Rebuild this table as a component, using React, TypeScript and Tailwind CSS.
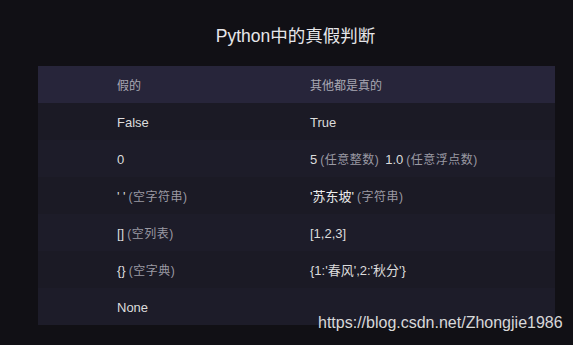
const FONT = "font-['Liberation_Sans','Noto_Sans_CJK_SC',sans-serif]";

type Cell = { main: string; note?: string; bright?: boolean };

const rows: { f: Cell[]; t: Cell[] }[] = [
  { f: [{ main: "False" }], t: [{ main: "True" }] },
  { f: [{ main: "0" }], t: [{ main: "5", note: "(任意整数)" }, { main: "1.0", note: "(任意浮点数)" }] },
  { f: [{ main: "' '", note: "(空字符串)" }], t: [{ main: "'苏东坡'", note: "(字符串)", bright: true }] },
  { f: [{ main: "[]", note: "(空列表)" }], t: [{ main: "[1,2,3]" }] },
  { f: [{ main: "{}", note: "(空字典)" }], t: [{ main: "{1:'春风',2:'秋分'}" }] },
  { f: [{ main: "None" }], t: [] },
];

function CellText({ items }: { items: Cell[] }) {
  return (
    <div className="flex items-center gap-[6px]">
      {items.map((c, i) => (
        <span key={i} className="flex items-center gap-[3px]">
          <span className={c.bright ? "text-[13px] text-[#ececec]" : "text-[13px] text-[#dcdcdc]"}>
            {c.main}
          </span>
          {c.note && <span className="text-[12px] tracking-[0.5px] text-[#9a99a3]">{c.note}</span>}
        </span>
      ))}
    </div>
  );
}

export default function App() {
  return (
    <main className={`relative h-[345px] w-[573px] overflow-hidden bg-[#111015] ${FONT}`}>
      <h1 className="pt-[24px] pb-[17px] pl-[18px] text-center text-[17.5px] leading-[25px] text-[#e6e6e9]">
        Python中的真假判断
      </h1>

      <div className="ml-[38px] w-[517px]">
        <div className="grid h-[37px] grid-cols-[217px_1fr] items-center bg-[#27253a] pt-[2px] text-[12px] text-[#a9a8b3]">
          <div className="pl-[79px]">假的</div>
          <div className="pl-[55px]">其他都是真的</div>
        </div>
        {rows.map((r, i) => (
          <div
            key={i}
            className={`grid h-[37px] grid-cols-[217px_1fr] items-center pt-[3px] ${
              i % 2 === 0 ? "bg-[#1b1a25]" : "bg-[#1d1c29]"
            }`}
          >
            <div className="pl-[79px]">
              <CellText items={r.f} />
            </div>
            <div className="pl-[55px]">
              <CellText items={r.t} />
            </div>
          </div>
        ))}
      </div>

      <div className="absolute left-[318px] top-[311px] font-['Liberation_Sans',sans-serif] text-[16px] text-[#d8d8d8]">
        https://blog.csdn.net/Zhongjie1986
      </div>
    </main>
  );
}
